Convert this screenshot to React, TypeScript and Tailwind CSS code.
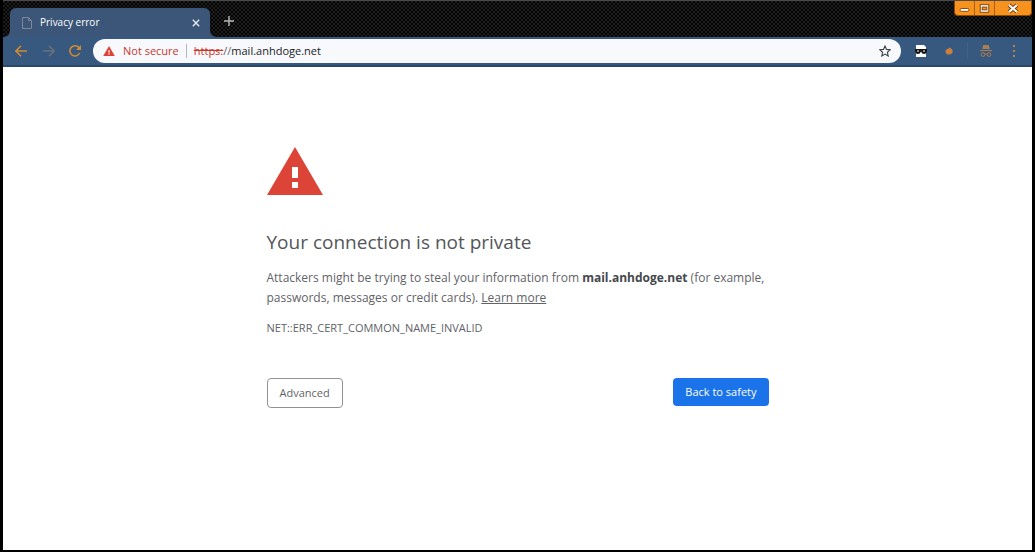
import { useState } from 'react';
import type { ReactNode } from 'react';

function WarningIcon({ className }: { className: string }) {
  return (
    <svg viewBox="0 0 56 48" className={className} aria-hidden="true">
      <path d="M28 0 56 48H0Z" fill="#db4437" />
      <path d="M25 20h6v11h-6zM25 35h6v6h-6z" fill="#fff" />
    </svg>
  );
}

function IconButton({ label, className, children }: { label: string; className: string; children: ReactNode }) {
  return (
    <button type="button" aria-label={label} className={`flex h-6 items-center justify-center ${className}`}>
      {children}
    </button>
  );
}

function WindowControls() {
  return (
    <div className="flex h-[15px] self-start rounded-b-sm border border-t-0 border-[#8a4a08] bg-[#f7921e]">
      <button type="button" aria-label="Minimize" className="flex w-5 items-center justify-center border-r border-[#a85c0c]">
        <svg viewBox="0 0 20 14" className="h-3.5 w-5">
          <rect x="5.5" y="7.5" width="9" height="3" rx="1" fill="#fff" stroke="#7a430c" />
        </svg>
      </button>
      <button type="button" aria-label="Maximize" className="flex w-5 items-center justify-center border-r border-[#a85c0c]">
        <svg viewBox="0 0 20 14" className="h-3.5 w-5">
          <rect x="5.5" y="3.5" width="9" height="8" fill="#fff" stroke="#7a430c" />
          <rect x="7.5" y="6" width="5" height="3" fill="#f7921e" stroke="#7a430c" />
        </svg>
      </button>
      <button type="button" aria-label="Close" className="flex w-9 items-center justify-center">
        <svg viewBox="0 0 20 14" className="h-3.5 w-5">
          <path d="m6 4 8 7M14 4l-8 7" stroke="#7a430c" strokeWidth="4" />
          <path d="m6 4 8 7M14 4l-8 7" stroke="#fff" strokeWidth="2" />
        </svg>
      </button>
    </div>
  );
}

function TabStrip() {
  return (
    <div className="flex h-[37px] items-end border-t border-[#4a4a4a] bg-[repeating-conic-gradient(#050505_0_25%,#1d1d1d_0_50%)] bg-size-[4px_4px]">
      <svg viewBox="0 0 7 7" className="size-[7px]" aria-hidden="true">
        <path d="M0 7h7V0Q7 7 0 7Z" fill="#3c5679" />
      </svg>
      <div className="flex h-[29px] w-[200px] items-center rounded-t-md bg-[#3c5679] pr-2 pl-3 text-[10px] text-white">
        <svg viewBox="0 0 10 12" className="h-3 w-2.5" fill="none" stroke="#7f8795">
          <path d="M.5.5h6l3 3v8h-9zM6.500.5v3h3" />
        </svg>
        <span className="ml-2 flex-1">Privacy error</span>
        <IconButton label="Close tab" className="w-3">
          <svg viewBox="0 0 8 8" className="size-2" stroke="#e4e9f0" strokeWidth="1.4">
            <path d="m.8.8 6.400 6.400M7.200.8.8 7.200" />
          </svg>
        </IconButton>
      </div>
      <svg viewBox="0 0 7 7" className="size-[7px]" aria-hidden="true">
        <path d="M0 0v7h7Q0 7 0 0Z" fill="#3c5679" />
      </svg>
      <IconButton label="New tab" className="mb-1 ml-1 w-4">
        <svg viewBox="0 0 10 10" className="size-2.5" stroke="#b9b9b9" strokeWidth="1.4">
          <path d="M5 0v10M0 5h10" />
        </svg>
      </IconButton>
      <div className="flex-1" />
      <WindowControls />
    </div>
  );
}

function Toolbar() {
  const [address, setAddress] = useState('mail.anhdoge.net');

  return (
    <div className="flex h-[30px] items-center border-b-2 border-[#2d4866] bg-[#37587f] px-2.5 text-[11px]">
      <IconButton label="Back" className="w-4">
        <svg viewBox="0 0 12 12" className="size-3" fill="none" stroke="#d08a35" strokeWidth="1.6">
          <path d="M12 6H1M6 .8.9 6 6 11.200" />
        </svg>
      </IconButton>
      <IconButton label="Forward" className="ml-3 w-4">
        <svg viewBox="0 0 12 12" className="size-3" fill="none" stroke="#6c7078" strokeWidth="1.6">
          <path d="M0 6h11M6 .8 11.100 6 6 11.200" />
        </svg>
      </IconButton>
      <IconButton label="Reload" className="ml-2.5 w-4">
        <svg viewBox="0 0 12 12" className="size-3" fill="none" stroke="#d08a35" strokeWidth="1.6">
          <path d="M10.600 8A5.100 5.100 0 1 1 9.700 2.400L11 3.700" />
          <path d="M12 0v5H7Z" fill="#d08a35" stroke="none" />
        </svg>
      </IconButton>

      <div className="ml-2.5 flex h-6 flex-1 items-center rounded-full bg-[#f7f9fc] pr-2 pl-2.5">
        <WarningIcon className="h-2.5 w-3" />
        <span className="ml-2 text-[#c9382c]">Not secure</span>
        <span className="mx-[7px] h-3.5 w-px bg-[#b4b7bb]" />
        <label htmlFor="address" className="text-[#5f6368]">
          <span className="text-[#c9382c] line-through">https:</span>//
        </label>
        <input
          id="address"
          value={address}
          onChange={(e) => setAddress(e.target.value)}
          className="min-w-0 flex-1 text-[#202124] outline-none"
        />
        <IconButton label="Bookmark" className="w-4">
          <svg viewBox="0 0 12 12" className="size-3" fill="none" stroke="#3c4043" strokeWidth="1.1">
            <path d="m6 1 1.500 3.400 3.700.4-2.800 2.500.8 3.700L6 9.100 2.800 11l.8-3.700L.8 4.800l3.700-.4Z" />
          </svg>
        </IconButton>
      </div>

      <IconButton label="Privacy extension" className="ml-3 w-4">
        <svg viewBox="0 0 12 12" className="size-3">
          <path d="M1 0h8l2 2v10H1z" fill="#fff" />
          <path d="M0 4h12v1.500Q11.500 9 9 9 7 9 6 6.500 5 9 3 9 .5 9 0 5.500Z" fill="#151515" />
          <path d="M2 6h2M8 6h2" stroke="#fff" />
        </svg>
      </IconButton>
      <IconButton label="Cookie extension" className="ml-3 w-4">
        <svg viewBox="0 0 8 8" className="size-2">
          <path d="M5 .5 7.500 3v3L5 7.500H2L.3 5 .8 3Z" fill="#c9803f" />
        </svg>
      </IconButton>
      <span className="ml-2.5 h-4 w-px bg-[#46617f]" />
      <IconButton label="Incognito" className="ml-2.5 w-4">
        <svg viewBox="0 0 12 12" className="size-3" fill="none" stroke="#a87e52">
          <path d="M3.200 0h5.600l1 4H2.200z" fill="#a87e52" stroke="none" />
          <path d="M0 5.500h12M5 9.300q1-.7 2 0" />
          <circle cx="3" cy="9.500" r="1.900" />
          <circle cx="9" cy="9.500" r="1.900" />
        </svg>
      </IconButton>
      <IconButton label="Menu" className="ml-3 w-4">
        <svg viewBox="0 0 4 12" className="h-3 w-1" fill="#b5824a">
          <rect x="1" width="2" height="2" />
          <rect x="1" y="5" width="2" height="2" />
          <rect x="1" y="10" width="2" height="2" />
        </svg>
      </IconButton>
    </div>
  );
}

export default function App() {
  return (
    <div className="flex min-h-screen flex-col border-x-3 border-b-2 border-black bg-white font-['Open_Sans','Noto_Sans',sans-serif]">
      <TabStrip />
      <Toolbar />

      {/* Interstitial */}
      <main className="mx-auto w-full max-w-[502px] flex-1 pt-20 text-xs leading-5 text-[#5f6368]">
        <WarningIcon className="h-12 w-14" />
        <h1 className="mt-[31px] text-[19px] leading-8 text-[#54565a]">Your connection is not private</h1>
        <p className="mt-2.5">
          Attackers might be trying to steal your information from{' '}
          <strong className="font-bold text-[#45484c]">mail.anhdoge.net</strong> (for example, passwords, messages or
          credit cards).{' '}
          <a href="#learn-more" className="underline">
            Learn more
          </a>
        </p>
        <p className="mt-2.5 text-[11px]">NET::ERR_CERT_COMMON_NAME_INVALID</p>
        <div className="mt-10 flex items-start justify-between text-[11px]">
          <button type="button" className="h-[30px] rounded border border-[#8f9296] px-3">
            Advanced
          </button>
          <button type="button" className="h-7 rounded bg-[#1a73e8] px-3 text-white">
            Back to safety
          </button>
        </div>
      </main>
    </div>
  );
}
